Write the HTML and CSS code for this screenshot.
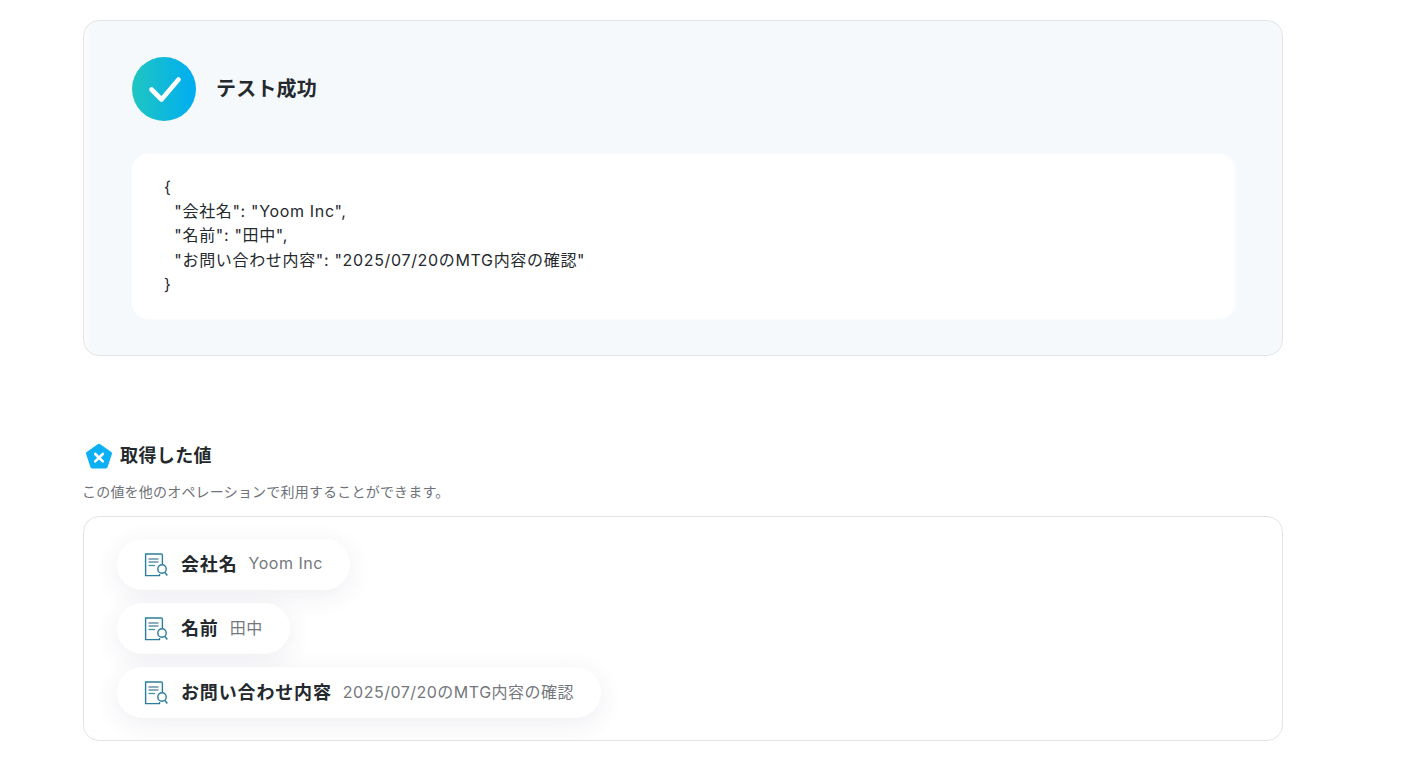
FILE: index.html
```html
<!DOCTYPE html>
<html lang="ja">
<head>
<meta charset="utf-8">
<title>テスト成功</title>
<link rel="stylesheet" href="styles.css">
</head>
<body>
<main class="page">
  <section class="result-card">
    <div class="result-head">
      <svg class="check" viewBox="0 0 64 64" width="64" height="64" aria-hidden="true">
        <defs>
          <linearGradient id="cg" x1="0" y1="0" x2="1" y2="0">
            <stop offset="0" stop-color="#1fc6c0"/>
            <stop offset="1" stop-color="#00adf2"/>
          </linearGradient>
        </defs>
        <circle cx="32" cy="32" r="32" fill="url(#cg)"/>
        <path d="M19.5 32.5 L29.5 42.5 L46.5 22.5" fill="none" stroke="#fff" stroke-width="4.6" stroke-linecap="round" stroke-linejoin="round"/>
      </svg>
      <h2 class="result-title">テスト成功</h2>
    </div>
    <pre class="code">{
  "会社名": "Yoom Inc",
  "名前": "田中",
  "お問い合わせ内容": "2025/07/20のMTG内容の確認"
}</pre>
  </section>

  <section class="values">
    <div class="values-head">
      <svg class="pent" viewBox="0 0 28 28" width="28" height="28" aria-hidden="true">
        <path d="M14 3.4 L25.4 11.4 L21 24.8 L7 24.8 L2.6 11.4 Z" fill="#0cb0f5" stroke="#0cb0f5" stroke-width="3.2" stroke-linejoin="round"/>
        <path d="M10.2 12 L17.8 19.4 M17.8 12 L10.2 19.4" fill="none" stroke="#fff" stroke-width="2.6" stroke-linecap="round"/>
      </svg>
      <h3 class="values-title">取得した値</h3>
    </div>
    <p class="values-sub">この値を他のオペレーションで利用することができます。</p>
    <div class="values-box">
      <div class="pill">
        <svg class="doc" viewBox="0 0 24 24" width="24" height="24" aria-hidden="true"><use href="#doc"/></svg>
        <span class="pill-key">会社名</span><span class="pill-val">Yoom Inc</span>
      </div>
      <div class="pill">
        <svg class="doc" viewBox="0 0 24 24" width="24" height="24" aria-hidden="true"><use href="#doc"/></svg>
        <span class="pill-key">名前</span><span class="pill-val">田中</span>
      </div>
      <div class="pill">
        <svg class="doc" viewBox="0 0 24 24" width="24" height="24" aria-hidden="true"><use href="#doc"/></svg>
        <span class="pill-key">お問い合わせ内容</span><span class="pill-val">2025/07/20のMTG内容の確認</span>
      </div>
    </div>
  </section>
</main>
<svg class="defs" width="0" height="0" aria-hidden="true">
  <symbol id="doc" viewBox="0 0 24 24">
    <path d="M15.5 21 V22.6 H1.6 V1 H17 C17.8 1 18.4 1.6 18.4 2.4 V11" fill="none" stroke="#2a7d9c" stroke-width="1.4"/>
    <path d="M4.5 6 H14.5 M4.5 9 H14.5" fill="none" stroke="#1c5f7a" stroke-width="1.2"/>
    <path d="M4.5 12.5 H11" fill="none" stroke="#3a8cab" stroke-width="1.2"/>
    <circle cx="18" cy="16" r="4.2" fill="#fff" stroke="#2a7d9c" stroke-width="1.4"/>
    <path d="M21 19.5 L23.3 22.5" fill="none" stroke="#2a7d9c" stroke-width="1.4"/>
  </symbol>
</svg>
</body>
</html>
```
FILE: styles.css
```css
* { box-sizing: border-box; }
html, body { margin: 0; padding: 0; background: #fff; }
body {
  font-family: "Inter", "Noto Sans CJK JP", sans-serif;
  color: #24292e;
  height: 774px;
  overflow: hidden;
}
.page {
  width: 1200px;
  margin-left: 83px;
  padding-top: 20px;
}
.result-card {
  height: 336px;
  padding: 36px 48px 36px 48px;
  background: linear-gradient(90deg, #fbfcfe 0, #f6f9fc 7px);
  border: 1px solid #e3e4e8;
  border-radius: 16px;
}
.result-head {
  display: flex;
  align-items: center;
  gap: 20px;
  height: 64px;
}
.check { display: block; flex: none; }
.result-title {
  margin: 0;
  font-size: 20px;
  line-height: 28px;
  font-weight: 600;
  letter-spacing: 0.2px;
  color: #24292e;
}
.code {
  margin: 33px 0 0;
  height: 165px;
  padding: 21px 32px 0;
  background: #fff;
  border-radius: 16px;
  box-shadow: 2px 0 3px rgba(255, 255, 255, 0.6);
  font-family: "Inter", "Noto Sans CJK JP", sans-serif;
  font-size: 16px;
  letter-spacing: 0.67px;
  line-height: 24.2px;
  color: #24292e;
  white-space: pre;
}
.values { margin-top: 85px; }
.values-head {
  display: flex;
  align-items: center;
  gap: 7px;
  height: 30px;
  padding-left: 2px;
}
.pent { display: block; flex: none; }
.values-title {
  margin: 0;
  font-size: 18px;
  line-height: 28px;
  font-weight: 600;
  letter-spacing: 0.4px;
  color: #24292e;
}
.values-sub {
  margin: 10px 0 0 -1px;
  font-size: 14px;
  line-height: 22px;
  letter-spacing: 0.2px;
  color: #6f7278;
}
.values-box {
  margin-top: 13px;
  height: 225px;
  padding: 22px 33px;
  display: flex;
  flex-direction: column;
  align-items: flex-start;
  gap: 13px;
  background: #fff;
  border: 1px solid #e3e4e8;
  border-radius: 16px;
}
.pill {
  display: flex;
  align-items: center;
  height: 51px;
  padding: 0 27px 3px;
  background: #fff;
  border-radius: 26px;
  box-shadow: 0 6px 26px rgba(70, 50, 110, 0.09);
}
.doc { display: block; flex: none; margin: 4px 13px 0 0; }
.pill-key {
  font-size: 18px;
  font-weight: 600;
  letter-spacing: 0.85px;
  color: #24292e;
  margin-right: 11px;
}
.pill-val {
  font-size: 16px;
  color: #74777c;
  letter-spacing: 0.5px;
}
.defs { position: absolute; }
```
